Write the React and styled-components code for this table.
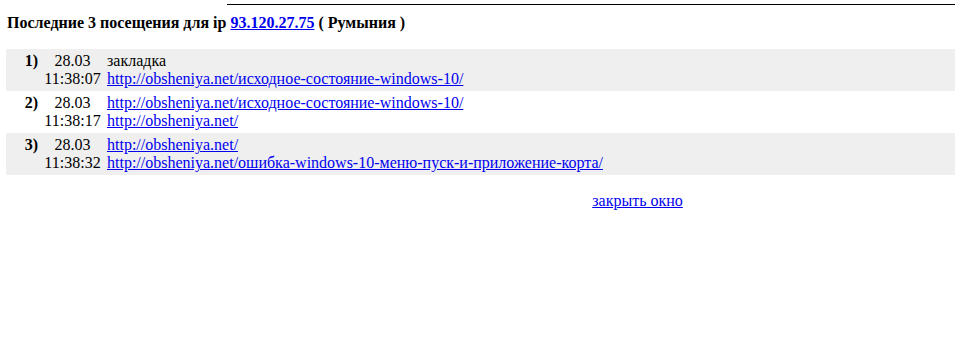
import React from "react";
import styled, { createGlobalStyle } from "styled-components";

const GlobalStyle = createGlobalStyle`
  html, body {
    margin: 0;
    padding: 0;
    background: #ffffff;
    overflow: hidden;
  }
  body {
    font-family: "Liberation Serif", "Times New Roman", serif;
    font-size: 16px;
    color: #000000;
  }
`;

const Viewport = styled.div`
  width: 100%;
  overflow: hidden;
`;

const Page = styled.div`
  width: 1263px;
  padding: 4px 0 0 6px;
`;

const Rule = styled.div`
  width: 65%;
  height: 1px;
  margin: 0 auto;
  background: #000000;
`;

const Title = styled.div`
  margin: 9px 0 17px;
  padding-left: 1px;
  font-weight: bold;
  line-height: 18px;
`;

const Link = styled.a`
  color: #0000ee;
  text-decoration: underline;
  cursor: pointer;
`;

const Visits = styled.div`
  display: flex;
  flex-direction: column;
`;

const Row = styled.div`
  display: grid;
  grid-template-columns: 35px 63px 1fr;
  padding: 3px 0 3px;
  line-height: 18px;
  background: ${(p) => (p.$shaded ? "#efefef" : "transparent")};
`;

const Num = styled.div`
  text-align: right;
  padding-right: 3px;
  font-weight: bold;
`;

const When = styled.div`
  text-align: center;
  white-space: nowrap;
`;

const Pages = styled.div`
  display: flex;
  flex-direction: column;
  padding-left: 3px;
  white-space: nowrap;
`;

const Footer = styled.div`
  margin-top: 17px;
  text-align: center;
  line-height: 18px;
`;

const visits = [
  {
    n: "1)",
    date: "28.03",
    time: "11:38:07",
    from: { text: "закладка" },
    to: "http://obsheniya.net/исходное-состояние-windows-10/",
  },
  {
    n: "2)",
    date: "28.03",
    time: "11:38:17",
    from: { link: "http://obsheniya.net/исходное-состояние-windows-10/" },
    to: "http://obsheniya.net/",
  },
  {
    n: "3)",
    date: "28.03",
    time: "11:38:32",
    from: { link: "http://obsheniya.net/" },
    to: "http://obsheniya.net/ошибка-windows-10-меню-пуск-и-приложение-корта/",
  },
];

export default function App() {
  return (
    <>
      <GlobalStyle />
      <Viewport>
        <Page>
          <Rule />
          <Title>
            Последние 3 посещения для ip <Link>93.120.27.75</Link> ( Румыния )
          </Title>
          <Visits>
            {visits.map((v, i) => (
              <Row key={v.n} $shaded={i % 2 === 0}>
                <Num>{v.n}</Num>
                <When>
                  <div>{v.date}</div>
                  <div>{v.time}</div>
                </When>
                <Pages>
                  {v.from.link ? (
                    <div>
                      <Link>{v.from.link}</Link>
                    </div>
                  ) : (
                    <div>{v.from.text}</div>
                  )}
                  <div>
                    <Link>{v.to}</Link>
                  </div>
                </Pages>
              </Row>
            ))}
          </Visits>
          <Footer>
            <Link>закрыть окно</Link>
          </Footer>
        </Page>
      </Viewport>
    </>
  );
}
